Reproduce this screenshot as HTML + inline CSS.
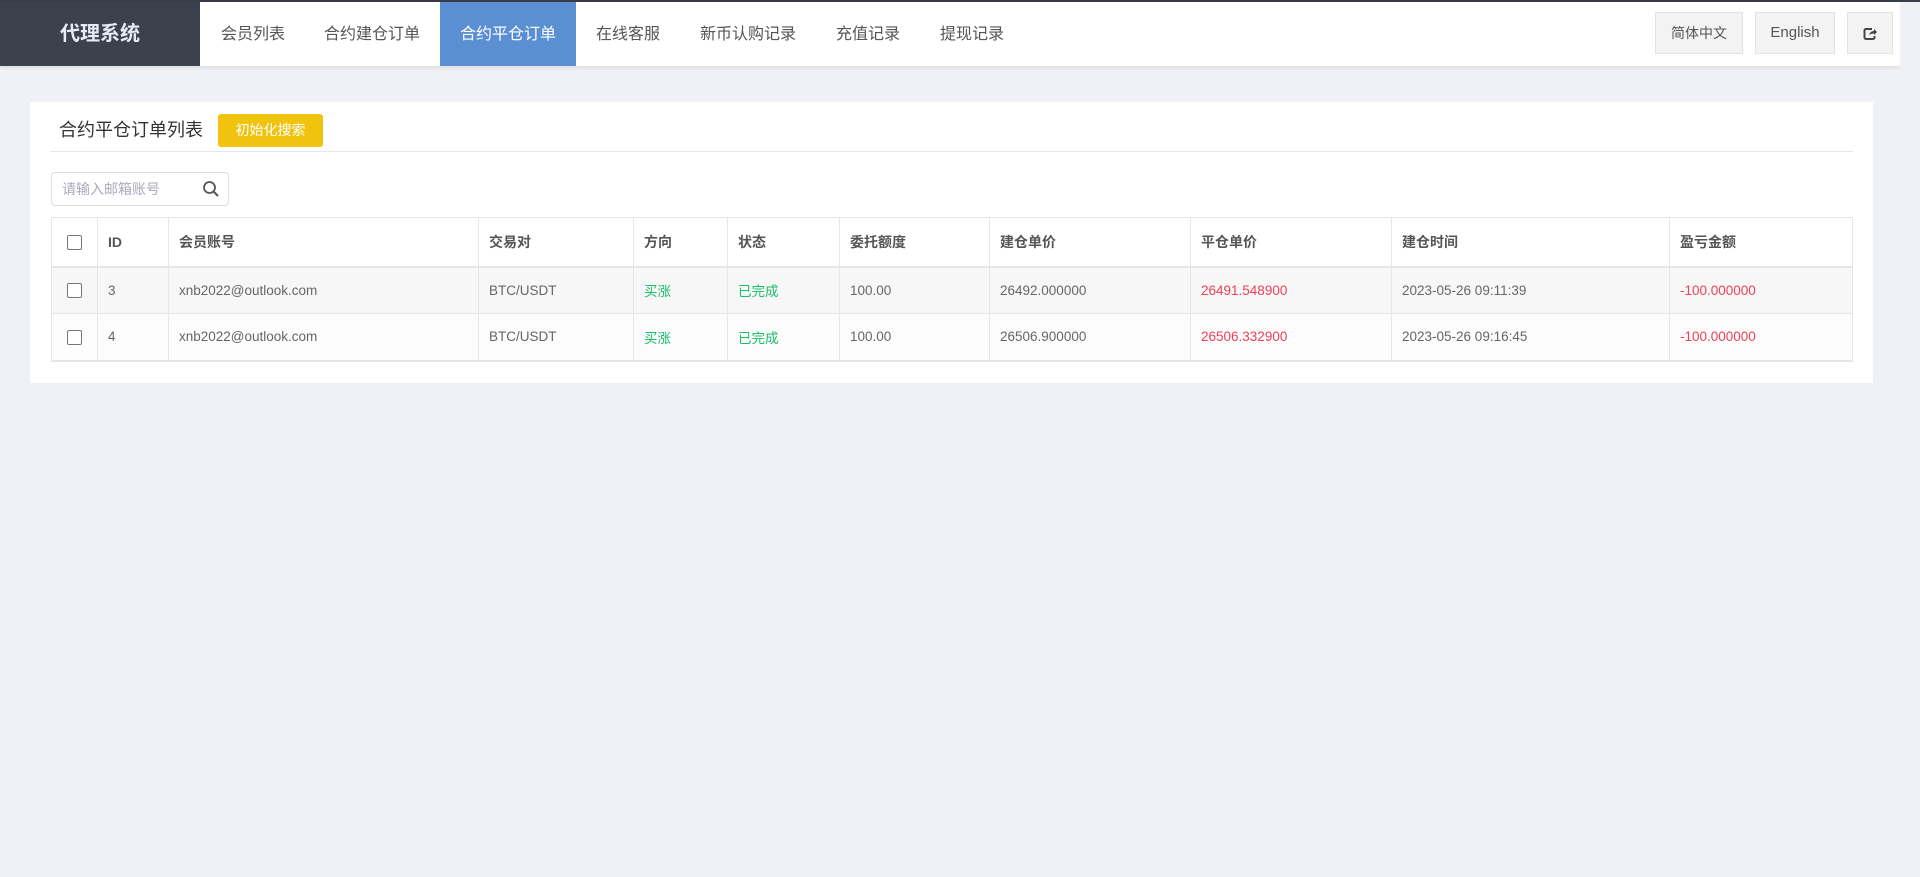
<!DOCTYPE html>
<html><head><meta charset="utf-8"><style>
*{box-sizing:border-box;margin:0;padding:0}
body{width:1920px;height:877px;background:#f0f1f6;font-family:"Liberation Sans","Noto Sans CJK SC",sans-serif;color:#555;position:relative;overflow:hidden}
.top{position:absolute;left:0;top:0;width:1920px;height:2px;background:#393d49}
.hdr{position:absolute;left:0;top:2px;width:1900px;height:64px;background:#fff;box-shadow:0 2px 4px rgba(0,0,0,.08)}
.logo{position:absolute;left:0;top:0;width:200px;height:64px;background:#3c424d;color:#e5ecf6;font-weight:bold;font-size:20px;line-height:64px;text-align:center}
.nav a{position:absolute;top:0;height:64px;line-height:66px;font-size:16px;color:#555;text-decoration:none;white-space:nowrap}
.nav a.act{background:#5b8fd3;color:#fff;text-align:center}
.lb{position:absolute;top:10px;height:42px;line-height:40px;background:#f3f3f3;border:1px solid #e3e3e3;font-size:14px;color:#555;text-align:center}
.sb{position:absolute;right:0;top:2px;width:20px;height:875px;background:#f0f1f6}
.card{position:absolute;left:30px;top:102px;width:1843px;height:281px;background:#fff}
.ttl{position:absolute;left:59px;top:114px;font-size:18px;color:#333;line-height:33px}
.btn{position:absolute;left:218px;top:114px;width:105px;height:33px;background:#f0c30f;color:#fff;border-radius:3px;font-size:14px;line-height:33px;text-align:center}
.line{position:absolute;left:50px;top:151px;width:1803px;height:1px;background:#e6e6e6}
.srch{position:absolute;left:51px;top:172px;width:178px;height:34px;border:1px solid #ddd;border-radius:4px;font-size:14px;color:#aab;line-height:32px;padding-left:10px}
table{position:absolute;left:51px;top:217px;width:1802px;border-collapse:collapse;font-size:13.5px}
td,th{border:1px solid #e6e6e6;text-align:left;padding-left:10px;white-space:nowrap}
th{height:49px;font-weight:bold;color:#555;font-size:14px;border-bottom:2px solid #e6e6e6}
td{height:47px;color:#666}
td:first-child,th:first-child{padding-left:0;text-align:center}
tr.r1 td{background:#f7f7f7}
tr.r2 td{background:#fcfcfc}
table tr:last-child td{border-bottom:2px solid #e6e6e6}
.cb{display:inline-block;width:15px;height:15px;border:1px solid #777;border-radius:2px;vertical-align:middle;background:#fff}
.g{color:#19be6b!important}.r{color:#ed4058!important}
</style></head><body>
<div class="top"></div>
<div class="hdr">
<div class="logo">代理系统</div>
<div class="nav">
<a style="left:221px">会员列表</a>
<a style="left:324px">合约建仓订单</a>
<a class="act" style="left:440px;width:136px">合约平仓订单</a>
<a style="left:596px">在线客服</a>
<a style="left:700px">新币认购记录</a>
<a style="left:836px">充值记录</a>
<a style="left:940px">提现记录</a>
</div>
<div class="lb" style="left:1655px;width:88px">简体中文</div>
<div class="lb" style="left:1755px;width:80px;font-size:15px">English</div>
<div class="lb" style="left:1847px;width:46px"><svg width="14" height="14" viewBox="0 0 14 14" style="vertical-align:middle"><path d="M9 2H3a1.5 1.5 0 0 0-1.5 1.5v7A1.5 1.5 0 0 0 3 12h7a1.5 1.5 0 0 0 1.5-1.5V9" fill="none" stroke="#444" stroke-width="2"/><path d="M6 8c1-3 3-4 5-4V2l3 3-3 3V6.5c-2 0-3.5.5-5 1.5z" fill="#444"/></svg></div>
</div>
<div class="sb"></div>
<div class="card"></div>
<div class="ttl">合约平仓订单列表</div>
<div class="btn">初始化搜索</div>
<div class="line"></div>
<div class="srch">请输入邮箱账号<svg width="18" height="18" viewBox="0 0 18 18" style="position:absolute;right:8px;top:7px"><circle cx="7.5" cy="7.5" r="5.5" fill="none" stroke="#555" stroke-width="1.8"/><path d="M11.5 11.5l4.5 4.5" stroke="#555" stroke-width="2"/></svg></div>
<table>
<colgroup><col style="width:46px"><col style="width:71px"><col style="width:310px"><col style="width:155px"><col style="width:94px"><col style="width:112px"><col style="width:150px"><col style="width:201px"><col style="width:201px"><col style="width:278px"><col></colgroup>
<tr><th><span class="cb"></span></th><th>ID</th><th>会员账号</th><th>交易对</th><th>方向</th><th>状态</th><th>委托额度</th><th>建仓单价</th><th>平仓单价</th><th>建仓时间</th><th>盈亏金额</th></tr>
<tr class="r1"><td><span class="cb"></span></td><td>3</td><td>xnb2022@outlook.com</td><td>BTC/USDT</td><td class="g">买涨</td><td class="g">已完成</td><td>100.00</td><td>26492.000000</td><td class="r">26491.548900</td><td>2023-05-26 09:11:39</td><td class="r">-100.000000</td></tr>
<tr class="r2"><td><span class="cb"></span></td><td>4</td><td>xnb2022@outlook.com</td><td>BTC/USDT</td><td class="g">买涨</td><td class="g">已完成</td><td>100.00</td><td>26506.900000</td><td class="r">26506.332900</td><td>2023-05-26 09:16:45</td><td class="r">-100.000000</td></tr>
</table>
</body></html>
